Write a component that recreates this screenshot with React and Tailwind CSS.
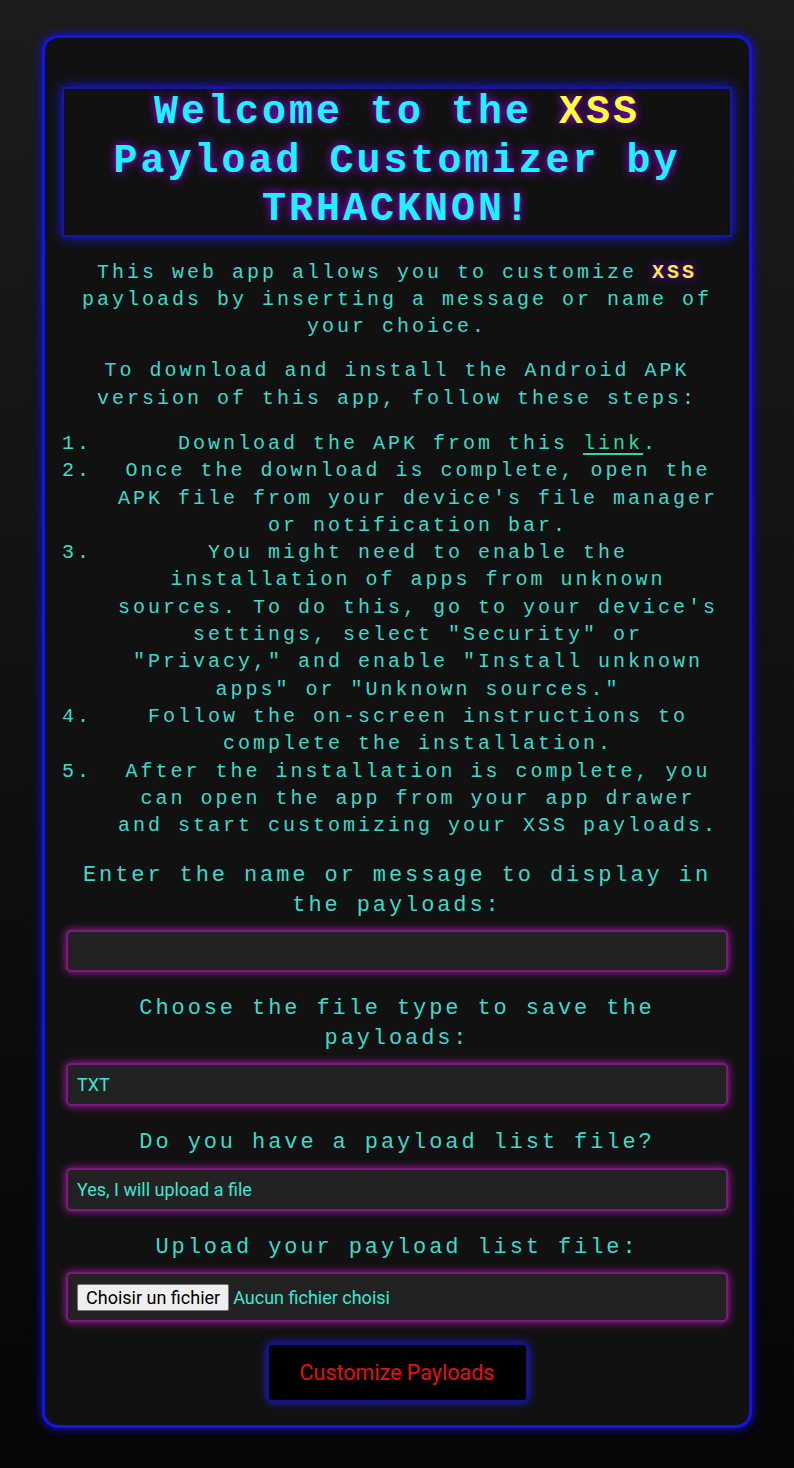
import React, { useState } from "react";

const mono = "font-['Liberation_Mono','Courier_New',monospace]";
const sans = "font-['Roboto','Liberation_Sans',sans-serif]";

const steps = [
  <>Download the APK from this <a href="#" className="text-[#35d6a0] underline underline-offset-4">link</a>.</>,
  <>Once the download is complete, open the APK file from your device's file manager or notification bar.</>,
  <>You might need to enable the installation of apps from unknown sources. To do this, go to your device's settings, select "Security" or "Privacy," and enable "Install unknown apps" or "Unknown sources."</>,
  <>Follow the on-screen instructions to complete the installation.</>,
  <>After the installation is complete, you can open the app from your app drawer and start customizing your XSS payloads.</>,
];

function Label({ children }) {
  return (
    <p className={`${mono} mt-[22px] mb-[10px] text-center text-[22px] leading-[29.5px] tracking-[2.9px] text-[#3fd9cb]`}>
      {children}
    </p>
  );
}

const field =
  "mx-[4px] rounded-[5px] border-2 border-[#7d1a7d] bg-[#222] shadow-[0_0_9px_#b01cb0] text-[#3ee6d6]";

export default function App() {
  const [name, setName] = useState("");
  const [fileType, setFileType] = useState("txt");
  const [hasList, setHasList] = useState("yes");

  return (
    <div className="min-h-screen bg-linear-to-b from-[#1c1c1c] to-[#060606] pt-[35px] pb-[40px]">
      <div className="mx-auto w-[710px] rounded-[16px] border-[3px] border-[#1515e0] bg-[#111] px-[17px] pt-[49px] pb-[23px] shadow-[0_0_10px_#1010ff]">
        {/* Header */}
        <div className="border-2 border-[#1616a8] bg-[#111] shadow-[0_0_12px_#1a1aff]">
          <h1
            className={`${mono} text-center text-[40px] font-bold leading-[48.5px] tracking-[3px] text-[#1ef2ff] [text-shadow:0_0_10px_#a000ff]`}
          >
            Welcome to the <span className="text-[#ffff3a]">XSS</span> Payload Customizer by TRHACKNON!
          </h1>
        </div>

        <div className={`${mono} text-[20px] leading-[27.3px] tracking-[3px] text-[#3fd9cb]`}>
          <p className="mt-[22px] text-center">
            This web app allows you to customize{" "}
            <span className="font-bold text-[#ffeb3b] [text-shadow:0_0_8px_#7a00ff]">XSS</span> payloads by
            inserting a message or name of your choice.
          </p>
          <p className="mt-[17px] text-center">
            To download and install the Android APK version of this app, follow these steps:
          </p>

          {/* Steps */}
          <ol className="mt-[18px]">
            {steps.map((step, i) => (
              <li key={i} className="grid grid-cols-[52px_608px]">
                <span>{i + 1}.</span>
                <span className="text-center">{step}</span>
              </li>
            ))}
          </ol>
        </div>

        <Label>Enter the name or message to display in the payloads:</Label>
        <input
          type="text"
          value={name}
          onChange={(e) => setName(e.target.value)}
          className={`${field} ${sans} block h-[42px] w-[662px] px-[9px] text-[18px] outline-none`}
        />

        <Label>Choose the file type to save the payloads:</Label>
        <select
          value={fileType}
          onChange={(e) => setFileType(e.target.value)}
          className={`${field} ${sans} block h-[43px] w-[662px] appearance-none px-[9px] text-[18px] outline-none`}
        >
          <option value="txt">TXT</option>
          <option value="json">JSON</option>
          <option value="csv">CSV</option>
        </select>

        <Label>Do you have a payload list file?</Label>
        <select
          value={hasList}
          onChange={(e) => setHasList(e.target.value)}
          className={`${field} ${sans} block h-[43px] w-[662px] appearance-none px-[9px] text-[18px] outline-none`}
        >
          <option value="yes">Yes, I will upload a file</option>
          <option value="no">No, use the default list</option>
        </select>

        <Label>Upload your payload list file:</Label>
        <label className={`${field} ${sans} flex h-[50px] w-[662px] cursor-pointer items-center gap-[4px] px-[9px] text-[18px]`}>
          <span className="rounded-[2px] border border-[#767676] bg-[#efefef] px-[8px] leading-[25px] text-black">
            Choisir un fichier
          </span>
          <span>Aucun fichier choisi</span>
          <input type="file" className="hidden" />
        </label>

        <div className="mt-[21px] flex justify-center">
          <button
            type="button"
            className={`${sans} h-[59px] w-[261px] rounded-[5px] border-2 border-[#12128c] bg-black text-[21.5px] text-[#e31212] shadow-[0_0_10px_#2020ff]`}
          >
            Customize Payloads
          </button>
        </div>
      </div>
    </div>
  );
}
